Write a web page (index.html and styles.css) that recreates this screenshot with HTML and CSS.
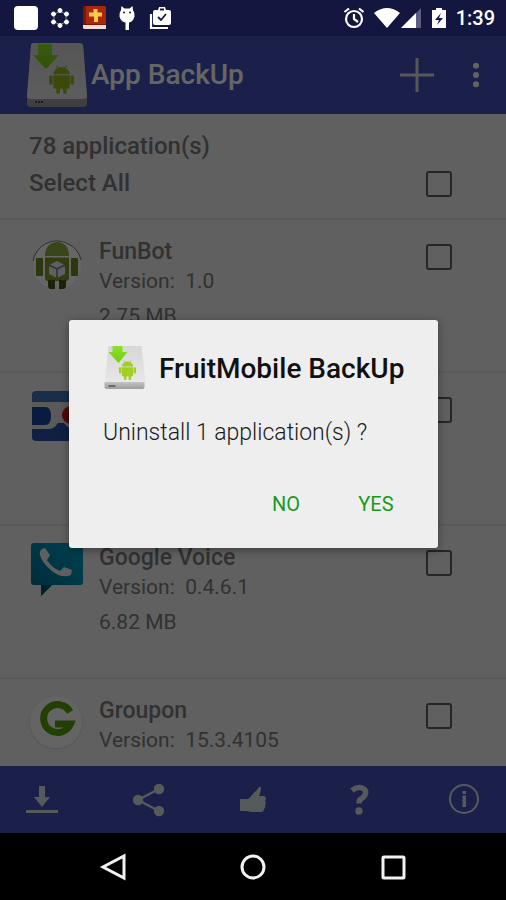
FILE: index.html
```html
<!DOCTYPE html>
<html lang="en">
<head>
<meta charset="utf-8">
<meta name="viewport" content="width=device-width, initial-scale=1">
<title>App BackUp</title>
<link rel="stylesheet" href="styles.css">
</head>
<body>
<svg class="defs" width="0" height="0" aria-hidden="true">
  <defs>
    <linearGradient id="face" x1="0" y1="0" x2="0" y2="1"><stop offset="0" stop-color="#d6d6d6"/><stop offset="1" stop-color="#e8e8e8"/></linearGradient>
    <linearGradient id="edge" x1="0" y1="0" x2="0" y2="1"><stop offset="0" stop-color="#c4c4c4"/><stop offset="1" stop-color="#9c9c9c"/></linearGradient>
    <linearGradient id="arrow" x1="0" y1="0" x2="0" y2="1"><stop offset="0" stop-color="#8ee02a"/><stop offset="1" stop-color="#78cc14"/></linearGradient>
    <symbol id="robot" viewBox="0 0 24 28">
      <path d="M4 9a8 7 0 0 1 16 0zM4 10h16v11a2 2 0 0 1-2 2H6a2 2 0 0 1-2-2z"/>
      <rect x="0" y="10" width="3.4" height="9" rx="1.5"/><rect x="20.600" y="10" width="3.4" height="9" rx="1.5"/>
      <rect x="7" y="20" width="3.5" height="8" rx="1.7"/><rect x="13.5" y="20" width="3.5" height="8" rx="1.7"/>
      <path d="M7 0.500l2 3M17 0.500l-2 3" stroke="currentColor" stroke-width="1"/>
    </symbol>
  </defs>
</svg>

<div class="screen">
  <header class="status">
    <div class="status-group">
      <svg class="s-icon" viewBox="0 0 26 26"><rect x="1" y="1" width="24" height="24" rx="4" fill="#fff"/></svg>
      <svg class="s-icon dots" viewBox="0 0 22 22" fill="#fff" stroke="#fff"><path d="M11 4 17 7.500V14.500L11 18 5 14.500V7.500z" fill="none" stroke-width="1" stroke-opacity=".5"/><circle cx="11" cy="3.500" r="2"/><circle cx="17.500" cy="7" r="2"/><circle cx="17.500" cy="15" r="2"/><circle cx="11" cy="18.500" r="2"/><circle cx="4.500" cy="15" r="2"/><circle cx="4.500" cy="7" r="2"/></svg>
      <svg class="s-icon" viewBox="0 0 26 26"><path d="M3 1h20q2 0 2 2v21H2V3q0-2 1-2z" fill="#7a1606"/><path d="M5 1h18q2 0 2 2v16H5z" fill="#a8280c"/><path d="M2 20h23v4H3q-1 0-1-2z" fill="#f0dcd0"/><path d="M12.500 4h4v3.500h4.500v4h-4V17h-4v-5.500H8v-4h4.500z" fill="#ffc84a"/></svg>
      <svg class="s-icon bug" viewBox="0 0 18 26" fill="#fff"><path d="M3.500 1l3 2.500h5L14.500 1l.5 4q2 3 1.500 6.500Q15 17 11 17.500V25H7.500v-7.500Q3 17 1.500 11.500 1 8 3 5z"/><circle cx="6" cy="7.500" r="1" fill="#131740"/><circle cx="12" cy="7.500" r="1" fill="#131740"/></svg>
      <svg class="s-icon" viewBox="0 0 26 26"><path d="M4 9v14h17" fill="none" stroke="#fff" stroke-width="2.200"/><path d="M8 5h3l1-3h6l1 3h3q2 0 2 2v11q0 2-2 2H8q-2 0-2-2V7q0-2 2-2z" fill="#fff"/><path d="M13 4.500h4M11 12l3 3 5-6" fill="none" stroke="#131740" stroke-width="1.800"/></svg>
    </div>
    <div class="status-group right">
      <svg class="alarm" viewBox="0 0 22 22" fill="none" stroke="#fff" stroke-width="2.200"><circle cx="11" cy="12" r="8"/><path d="M11 7v5l4 3M1.500 5 6 1.500M20.500 5 16 1.500"/></svg>
      <svg class="wifi" viewBox="0 0 26 22"><path d="M0 6Q13-4 26 6L13 21z" fill="#fff"/></svg>
      <svg class="cell" viewBox="0 0 21 22"><path d="M0 21 20 1v20z" fill="#5a5e80"/><path d="M0 21 15 6v15z" fill="#fff"/></svg>
      <svg class="battery" viewBox="0 0 16 22"><path d="M1 3h4V1h6v2h4v18H1z" fill="#fff"/><path d="M10 6l-6 7h4l-2 5 6-7H8z" fill="#131740"/></svg>
      <time>1:39</time>
    </div>
  </header>

  <main class="app">
    <div class="toolbar">
      <svg class="logo" viewBox="0 0 62 66">
        <path d="M8 1h46q2 0 3 2l4 51v8q0 3-4 3H5q-4 0-4-3v-8L5 4q0-3 3-3z" fill="url(#edge)"/>
        <path d="M8 1h46q2 0 3 2l4 51q0 3-4 3H5q-4 0-4-3L5 4q0-3 3-3z" fill="url(#face)"/>
        <path d="M9 60h8" stroke="#444" stroke-width="2" stroke-dasharray="2 1"/>
        <path d="M12 2h14v11h7L20 27 7 13h5z" fill="url(#arrow)"/>
        <use href="#robot" x="23" y="23" width="25" height="29" fill="#93b81c" color="#93b81c"/>
      </svg>
      <h1>App BackUp</h1>
      <button class="icon-button" type="button" aria-label="Add"><svg class="plus" viewBox="0 0 34 34"><path d="M17 0v34M0 17h34" stroke="#dcdcdc" stroke-width="3"/></svg></button>
      <button class="icon-button" type="button" aria-label="More options"><svg class="more" viewBox="0 0 8 24" fill="#f5f5f5"><circle cx="4" cy="3.500" r="2.800"/><circle cx="4" cy="12" r="2.800"/><circle cx="4" cy="20.500" r="2.800"/></svg></button>
    </div>

    <section class="summary">
      <p>78 application(s)</p>
      <div class="select-all"><label for="all">Select All</label><input type="checkbox" id="all"></div>
    </section>

    <ul class="apps">
      <li>
        <svg class="app-icon" viewBox="0 0 56 56">
          <circle cx="29" cy="29" r="24" fill="#fff"/>
          <path d="M5 25a24.500 24.500 0 0 1 48-1" fill="none" stroke="#777"/>
          <path d="M17 20q0-13 12-14 12 1 12 14z" fill="#8fae3c"/><path d="M17 21.500h24V42q0 3-3 3H20q-3 0-3-3z" fill="#7a9a28"/>
          <rect x="8" y="22" width="7" height="18" rx="1" fill="#6c8b20"/><rect x="43" y="22" width="7" height="18" rx="1" fill="#6c8b20"/>
          <path d="M20 44h7v9h-4q-3 0-3-3zM31 44h7v6q0 3-3 3h-4z" fill="#42591a"/>
          <path d="M29 25l8 4v9l-8 4-8-4v-9z" fill="#eee"/><path d="M21 29l8 4 8-4M29 33v9" fill="none" stroke="#777" stroke-width="1.500"/>
        </svg>
        <div class="details"><h2><label for="a1">FunBot</label></h2><p>Version:&nbsp; 1.0</p><p class="size">2.75 MB</p></div>
        <input type="checkbox" id="a1">
      </li>
      <li>
        <svg class="app-icon" viewBox="0 0 56 56">
          <rect x="4" y="3" width="54" height="49" rx="4" fill="#2c4ea8"/>
          <path d="M4 13V6q0-4 4-4h50v11z" fill="#4270b8"/>
          <path d="M4 13h54v27H46q-5 0-10-6h-6q-4 6-9 6H4z" fill="#e0e0e0"/>
          <path d="M4 18h13q6 0 6 9t-6 9H4z" fill="#1746a0"/><circle cx="43" cy="26" r="9" fill="#c81818"/>
        </svg>
        <div class="details"></div>
        <input type="checkbox" aria-label="Select application">
      </li>
      <li>
        <svg class="app-icon" viewBox="0 0 56 56">
          <defs><linearGradient id="voice" x1="0" y1="1" x2="1" y2="0"><stop offset="0" stop-color="#00688c"/><stop offset="1" stop-color="#00a6cb"/></linearGradient></defs>
          <path d="M6 1h46q3 0 3 3v36q0 3-3 3H24L13 54V43H6q-3 0-3-3V4q0-3 3-3z" fill="url(#voice)"/><path d="M13 43h11L13 54z" fill="#00526c"/>
          <path d="M14 7l3-1 5 7-3 5q5 8 13 11l4-4 8 3-1 5q-9 4-19-4T12 13q-1-4 2-6z" fill="#eee"/>
        </svg>
        <div class="details"><h2><label for="a3">Google Voice</label></h2><p>Version:&nbsp; 0.4.6.1</p><p class="size">6.82 MB</p></div>
        <input type="checkbox" id="a3">
      </li>
      <li>
        <svg class="app-icon" viewBox="0 0 56 56">
          <circle cx="28" cy="28" r="27" fill="#e2e2e2"/><circle cx="28" cy="27" r="26" fill="#fafafa"/>
          <path d="M42 17A14 14 0 1 0 42.500 29H27" fill="none" stroke="#55a00c" stroke-width="7"/>
        </svg>
        <div class="details"><h2><label for="a4">Groupon</label></h2><p>Version:&nbsp; 15.3.4105</p></div>
        <input type="checkbox" id="a4">
      </li>
    </ul>

    <nav class="actions" aria-label="Actions">
      <button type="button" aria-label="Back up"><svg viewBox="0 0 34 34" fill="currentColor"><path d="M14 3h6v11h5l-8 10-8-10h5zM1 27h32v3H1z"/></svg></button>
      <button type="button" aria-label="Share"><svg viewBox="0 0 34 34" fill="currentColor"><path d="M28 6 7 17l21 11" fill="none" stroke="currentColor" stroke-width="2.500"/><circle cx="28" cy="6" r="5.200"/><circle cx="7" cy="17" r="5.200"/><circle cx="28" cy="28" r="5.200"/></svg></button>
      <button type="button" aria-label="Rate"><svg viewBox="0 0 34 34" fill="currentColor"><path d="M4 17q0-1 1-1h7q2-1 4-4 1-2 4-4l3-4q2-1 2 2 0 3-2 7h4q3 0 3 3l-1 2q2 2 0 4 1 3-1 4 0 3-3 3H15q-3-1-5-1H5q-1 0-1-1z"/></svg></button>
      <button type="button" aria-label="Help"><svg viewBox="0 0 34 34" fill="currentColor"><path d="M10 7.500q5-4 10-2.500 5 2 3 7-1 2-4 4-2 1-2 4.500" fill="none" stroke="currentColor" stroke-width="5.500"/><circle cx="17" cy="28" r="3.700"/></svg></button>
      <button type="button" aria-label="About"><svg viewBox="0 0 34 34" fill="currentColor"><circle cx="17" cy="16" r="14" fill="none" stroke="currentColor" stroke-width="2"/><path d="M15.500 8h3.500v3h-3.500zM15.500 12.500h3.500V24h-3.500z"/></svg></button>
    </nav>
    <div class="scrim"></div>
  </main>

  <footer class="system">
    <button type="button" aria-label="Back"><svg viewBox="0 0 30 30"><path d="M26 4v22L5 15z"/></svg></button>
    <button type="button" aria-label="Home"><svg viewBox="0 0 30 30"><circle cx="15" cy="15" r="11"/></svg></button>
    <button type="button" aria-label="Recent"><svg viewBox="0 0 30 30"><rect x="5" y="5" width="21" height="21" rx="1"/></svg></button>
  </footer>

  <div class="overlay">
    <div class="dialog" role="dialog" aria-labelledby="dialog-title">
      <div class="dialog-head">
        <svg class="dialog-logo" viewBox="0 0 42 46">
          <path d="M5 1h33l4 37H1z" fill="url(#face)"/>
          <path d="M1 37h40v5q0 2-2 2H3q-2 0-2-2z" fill="url(#edge)"/><path d="M5 41h7" stroke="#555" stroke-width="1.500"/>
          <path d="M9 1h10v6h5l-9 11L5 7h4z" fill="url(#arrow)"/>
          <use href="#robot" x="15" y="15" width="18" height="20" fill="#a4ce22" color="#a4ce22"/>
        </svg>
        <h2 id="dialog-title">FruitMobile BackUp</h2>
      </div>
      <p>Uninstall 1 application(s) ?</p>
      <div class="dialog-actions"><button type="button">NO</button><button type="button">YES</button></div>
    </div>
  </div>
</div>
</body>
</html>
```

FILE: styles.css
```css
* { box-sizing: border-box; }
body, h1, h2, p, ul { margin: 0; padding: 0; }
body { font-family: Roboto, "Liberation Sans", sans-serif; background: #000; }
button { margin: 0; padding: 0; border: 0; background: none; font: inherit; color: inherit; }
svg { display: block; flex: none; }
.defs { position: absolute; }

.screen { position: relative; display: flex; flex-direction: column; height: 100vh; overflow: hidden; }

.status { display: flex; justify-content: space-between; align-items: center; flex: none; height: 36px; padding: 0 11px 0 13px; background: #131740; color: #fff; }
.status-group { display: flex; align-items: center; gap: 10px; }
.status-group.right { gap: 9px; }
.s-icon { width: 26px; height: 26px; }
.dots { width: 22px; height: 22px; }
.bug { width: 18px; margin: 0 1px; }
.alarm { width: 22px; height: 22px; }
.wifi { width: 26px; height: 22px; }
.cell { width: 21px; height: 22px; margin-left: -8px; }
.battery { width: 16px; height: 22px; }
.status time { font-size: 20px; line-height: 24px; font-weight: 500; }

.app { position: relative; display: flex; flex: 1; flex-direction: column; min-height: 0; background: #f0f0f0; color: #7c7c7c; }
.scrim { position: absolute; inset: 0; background: rgba(0, 0, 0, 0.6); }

.toolbar { display: flex; align-items: center; flex: none; height: 78px; padding: 0 21px 0 26px; background: #4150b6; color: #fff; }
.logo { width: 62px; height: 66px; }
.toolbar h1 { flex: 1; margin-left: 3px; font-size: 28px; line-height: 32px; font-weight: 500; }
.icon-button + .icon-button { margin-left: 33px; }
.plus { width: 34px; height: 34px; }
.more { width: 18px; height: 26px; }

.summary { flex: none; height: 106px; padding: 14px 54px 0 29px; border-bottom: 2px solid #e0e0e0; color: #7b7b7b; font-size: 24px; line-height: 37px; font-weight: 500; }
.select-all { display: flex; justify-content: space-between; align-items: center; }

input[type="checkbox"] { appearance: none; flex: none; width: 26px; height: 26px; margin: 0; border: 2px solid #5f5f5f; border-radius: 3px; }

.apps { flex: 1; min-height: 0; overflow: hidden; list-style: none; }
.apps li { display: flex; align-items: flex-start; height: 153px; padding: 16px 54px 0 28px; border-bottom: 2px solid #e0e0e0; }
.app-icon { width: 56px; height: 56px; }
.apps input { margin-top: 8px; }
.details { flex: 1; margin-left: 15px; font-size: 21px; line-height: 28px; white-space: nowrap; }
.details h2 { font-size: 23px; line-height: 31px; font-weight: 500; }
.details .size { margin-top: 7px; }

.actions { display: flex; justify-content: space-between; align-items: center; flex: none; height: 67px; padding: 0 25px; background: #4150b6; color: #d8e0e4; }
.actions svg { width: 34px; height: 34px; }

.system { display: flex; justify-content: space-around; align-items: center; flex: none; height: 67px; padding: 0 43px; background: #000; }
.system svg { width: 30px; height: 30px; fill: none; stroke: #f2f2f2; stroke-width: 3; }

.overlay { position: absolute; inset: 0; display: flex; align-items: center; justify-content: center; padding: 0 68px 32px 69px; }
.dialog { width: 100%; padding: 25px 25px 22px 34px; border-radius: 3px; background: #eee; color: #1b1b1b; box-shadow: 0 2px 8px rgba(0, 0, 0, 0.4); }
.dialog-head { display: flex; align-items: center; gap: 13px; }
.dialog-logo { width: 43px; height: 46px; }
.dialog h2 { padding-top: 2px; font-size: 28px; line-height: 32px; font-weight: 500; white-space: nowrap; color: #111; }
.dialog p { margin-top: 27px; font-size: 23px; line-height: 30px; font-weight: 300; }
.dialog-actions { display: flex; justify-content: flex-end; gap: 16px; margin-top: 34px; }
.dialog-actions button { min-width: 74px; height: 44px; font-size: 20px; line-height: 24px; font-weight: 400; color: #169b1c; }
```
